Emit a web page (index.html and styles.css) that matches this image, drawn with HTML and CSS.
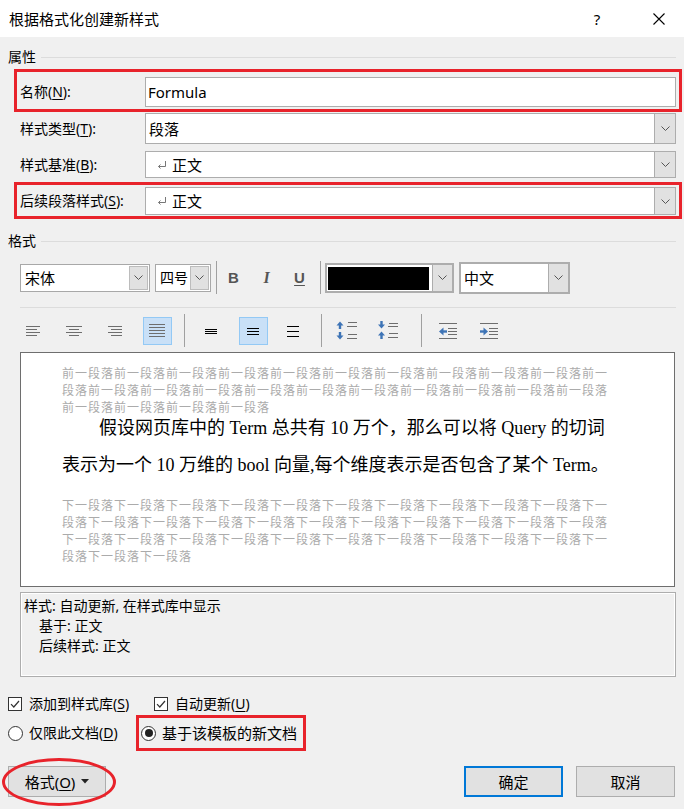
FILE: index.html
```html
<!DOCTYPE html>
<html lang="zh-CN">
<head>
<meta charset="utf-8">
<title>根据格式化创建新样式</title>
<link rel="stylesheet" href="styles.css">
</head>
<body>
<div class="titlebar">
  <span class="title">根据格式化创建新样式</span>
  <span class="help">?</span>
  <span class="close"><svg width="12" height="12" viewBox="0 0 12 12"><path d="M0.5 0.5L11.5 11.5M11.5 0.5L0.5 11.5" stroke="#000" stroke-width="1.1" fill="none"/></svg></span>
</div>

<div class="group-head"><span>属性</span><i class="rule"></i></div>

<div class="prop-row marked r1">
  <label>名称(<u>N</u>):</label>
  <div class="field h30"><span class="val latin">Formula</span></div>
</div>
<div class="prop-row r2">
  <label>样式类型(<u>T</u>):</label>
  <div class="field h31"><span class="val">段落</span><span class="dd"><svg width="9" height="5"><path d="M0.5 0.5L4.5 4.5L8.5 0.5" fill="none" stroke="#555"/></svg></span></div>
</div>
<div class="prop-row r3">
  <label>样式基准(<u>B</u>):</label>
  <div class="field h27"><span class="val ret"><svg class="retsym" width="10" height="8"><path d="M8.5 0V5.5H1.5M3.5 3.5L1.5 5.5L3.5 7.5" fill="none" stroke="#777"/></svg>正文</span><span class="dd"><svg width="9" height="5"><path d="M0.5 0.5L4.5 4.5L8.5 0.5" fill="none" stroke="#555"/></svg></span></div>
</div>
<div class="prop-row marked r4">
  <label>后续段落样式(<u>S</u>):</label>
  <div class="field h28"><span class="val ret"><svg class="retsym" width="10" height="8"><path d="M8.5 0V5.5H1.5M3.5 3.5L1.5 5.5L3.5 7.5" fill="none" stroke="#777"/></svg>正文</span><span class="dd"><svg width="9" height="5"><path d="M0.5 0.5L4.5 4.5L8.5 0.5" fill="none" stroke="#555"/></svg></span></div>
</div>

<div class="group-head g2"><span>格式</span><i class="rule"></i></div>

<div class="font-bar">
  <div class="select font"><span class="val">宋体</span><span class="dd inset"><svg width="9" height="5"><path d="M0.5 0.5L4.5 4.5L8.5 0.5" fill="none" stroke="#555"/></svg></span></div>
  <div class="select size"><span class="val">四号</span><span class="dd inset"><svg width="9" height="5"><path d="M0.5 0.5L4.5 4.5L8.5 0.5" fill="none" stroke="#555"/></svg></span></div>
  <i class="vsep s1"></i>
  <span class="fmt b">B</span>
  <span class="fmt i">I</span>
  <span class="fmt u">U</span>
  <i class="vsep s2"></i>
  <div class="select color"><span class="swatch"></span><span class="dd"><svg width="9" height="5"><path d="M0.5 0.5L4.5 4.5L8.5 0.5" fill="none" stroke="#555"/></svg></span></div>
  <div class="select lang"><span class="val">中文</span><span class="dd"><svg width="9" height="5"><path d="M0.5 0.5L4.5 4.5L8.5 0.5" fill="none" stroke="#555"/></svg></span></div>
</div>

<div class="hr"></div>

<div class="align-bar">
  <span class="tb m18"><svg width="27" height="26"><path d="M7 8.5h14M7 11.5h11M7 14.5h14M7 17.5h11" stroke="#6e6e6e"/></svg></span>
  <span class="tb m12"><svg width="27" height="26"><path d="M6 8.5h16M9 11.5h10M6 14.5h16M9 17.5h10" stroke="#6e6e6e"/></svg></span>
  <span class="tb m12"><svg width="27" height="26"><path d="M7 8.5h14M10 11.5h11M7 14.5h14M10 17.5h11" stroke="#6e6e6e"/></svg></span>
  <span class="tb on m14"><svg width="27" height="26"><path d="M5 6.5h16M5 9.5h16M5 12.5h16M5 15.5h16M5 18.5h16" stroke="#6e6e6e"/></svg></span>
  <i class="vsep tall m12"></i>
  <span class="tb m11"><svg width="27" height="26"><path d="M8 11.5h12M8 13.5h12M8 15.5h12" stroke="#000"/></svg></span>
  <span class="tb on m14"><svg width="27" height="26"><path d="M7 10.5h12M7 13.5h12M7 16.5h12" stroke="#000"/></svg></span>
  <span class="tb m10"><svg width="27" height="26"><path d="M8 8.5h12M8 13.5h12M8 18.5h12" stroke="#000"/></svg></span>
  <i class="vsep tall m14"></i>
  <span class="tb m10"><svg width="27" height="26"><path d="M3.5 7.5L7 3.5L10.5 7.5Z M3.5 17.5L7 21.5L10.5 17.5Z" fill="#3e74b6"/><path d="M7 6.5V11M7 14V18.5" stroke="#3e74b6" stroke-width="2.4"/><path d="M15 4.5h9M14 8.5h10M15 16.5h9M14 20.5h10" stroke="#6e6e6e"/></svg></span>
  <span class="tb m13"><svg width="27" height="26"><path d="M3 6.5L6.5 10.5L10 6.5Z M3 17.5L6.5 13.5L10 17.5Z" fill="#3e74b6"/><path d="M6.5 3V7.5M6.5 16.5V21" stroke="#3e74b6" stroke-width="2.4"/><path d="M14 5.5h9M13 8.5h10M14 15.5h9M13 19.5h10" stroke="#6e6e6e"/></svg></span>
  <i class="vsep tall m18"></i>
  <span class="tb m11"><svg width="27" height="26"><path d="M5 5.5h18M14 10.5h9M14 13.5h9M14 16.5h9M5 20.5h18" stroke="#6e6e6e"/><path d="M5 13.5L9.5 9.5V17.5Z" fill="#3e74b6"/><path d="M9 13.5H13" stroke="#3e74b6" stroke-width="2.4"/></svg></span>
  <span class="tb m12"><svg width="27" height="26"><path d="M5 5.5h18M14 10.5h9M14 13.5h9M14 16.5h9M5 20.5h18" stroke="#6e6e6e"/><path d="M13 13.5L8.5 9.5V17.5Z" fill="#3e74b6"/><path d="M5 13.5H9" stroke="#3e74b6" stroke-width="2.4"/></svg></span>
</div>

<div class="preview">
  <div class="ghost">
    <div>前一段落前一段落前一段落前一段落前一段落前一段落前一段落前一段落前一段落前一段落前一</div>
    <div>段落前一段落前一段落前一段落前一段落前一段落前一段落前一段落前一段落前一段落前一段落</div>
    <div>前一段落前一段落前一段落前一段落</div>
  </div>
  <div class="main">
    <div class="l1">假设网页库中的 Term 总共有 10 万个，那么可以将 Query 的切词</div>
    <div>表示为一个 10 万维的 bool 向量,每个维度表示是否包含了某个 Term。</div>
  </div>
  <div class="ghost after">
    <div>下一段落下一段落下一段落下一段落下一段落下一段落下一段落下一段落下一段落下一段落下一</div>
    <div>段落下一段落下一段落下一段落下一段落下一段落下一段落下一段落下一段落下一段落下一段落</div>
    <div>下一段落下一段落下一段落下一段落下一段落下一段落下一段落下一段落下一段落下一段落下一</div>
    <div>段落下一段落下一段落</div>
  </div>
</div>

<div class="desc">
  <div>样式: 自动更新, 在样式库中显示</div>
  <div class="ind">基于: 正文</div>
  <div class="ind">后续样式: 正文</div>
</div>

<div class="check-row">
  <span class="opt o1"><span class="cbox"><svg width="12" height="12"><path d="M2 6.2L4.8 9L10 3" fill="none" stroke="#333" stroke-width="1.2"/></svg></span><span class="lbl">添加到样式库(<u>S</u>)</span></span>
  <span class="opt"><span class="cbox"><svg width="12" height="12"><path d="M2 6.2L4.8 9L10 3" fill="none" stroke="#333" stroke-width="1.2"/></svg></span><span class="lbl">自动更新(<u>U</u>)</span></span>
</div>

<div class="radio-row">
  <span class="opt r-o1"><span class="radio"></span><span class="lbl r">仅限此文档(<u>D</u>)</span></span>
  <span class="opt marked-sm"><span class="radio on"></span><span class="lbl r">基于该模板的新文档</span></span>
</div>

<div class="btn-row">
  <span class="btn fmtbtn">格式(<u>O</u>)<svg class="caret" width="8" height="5"><path d="M0 0H8L4 4.5Z" fill="#222"/></svg></span>
  <span class="spacer"></span>
  <span class="btn primary">确定</span>
  <span class="btn cancel">取消</span>
</div>

<div class="ring"></div>
</body>
</html>
```
FILE: styles.css
```css
* { box-sizing: border-box; }
html, body { margin: 0; padding: 0; }
body {
  width: 684px;
  height: 809px;
  overflow: hidden;
  position: relative;
  background: #f0f0f0;
  color: #000;
  font-family: "Noto Sans", "Noto Sans CJK SC", sans-serif;
  font-size: 14px;
  white-space: nowrap;
}
u { text-decoration: underline; text-underline-offset: 2px; }

/* title bar */
.titlebar {
  height: 37px;
  background: #fff;
  display: flex;
  align-items: center;
  padding-left: 9px;
  padding-right: 6px;
}
.title { flex: 1; font-size: 15px; line-height: 20px; }
.help { width: 30px; text-align: center; font-size: 15px; line-height: 20px; margin-right: 28px; }
.close { width: 38px; display: flex; justify-content: center; }

/* group headers */
.group-head {
  display: flex;
  align-items: center;
  height: 18px;
  margin-top: 11px;
  padding: 0 8px;
  font-size: 14px;
  line-height: 18px;
}
.group-head.g2 { margin-top: 13px; }
.group-head .rule { flex: 1; height: 1px; background: #dcdcdc; margin-left: 5px; }

/* property rows */
.prop-row {
  display: flex;
  align-items: center;
  margin: 0 8px 0 20px;
}
.prop-row label { width: 125px; font-size: 14px; line-height: 20px; }
.marked {
  border: 3px solid #e8232b;
  margin: 0 2px 0 14px;
  padding-left: 3px;
  padding-right: 3px;
}
.r1 { margin-top: 3px; padding-top: 5px; padding-bottom: 2px; }
.r2 { margin-top: 1px; }
.r3 { margin-top: 7px; }
.r4 { margin-top: 4px; padding-top: 2px; padding-bottom: 1px; }

.field {
  flex: 1;
  display: flex;
  align-items: center;
  background: #fff;
  border: 1px solid #adadad;
}
.h30 { height: 30px; }
.h31 { height: 31px; }
.h27 { height: 27px; }
.h28 { height: 28px; }
.field .val { flex: 1; padding-left: 3px; font-size: 15px; line-height: 20px; }
.field .val.latin { padding-left: 2px; }
.val.ret { display: flex; align-items: center; padding-left: 11px; }
.retsym { margin-right: 5px; }
.dd {
  width: 21px;
  flex: none;
  align-self: stretch;
  background: #e1e1e1;
  border-left: 1px solid #adadad;
  display: flex;
  align-items: center;
  justify-content: center;
}

/* font bar */
.font-bar {
  display: flex;
  align-items: center;
  height: 33px;
  margin: 11px 0 0 20px;
}
.select {
  display: flex;
  align-items: stretch;
  background: #fff;
  border: 1px solid #a8a8a8;
  font-size: 15px;
}
.select .val { flex: 1; padding-left: 4px; line-height: 26px; overflow: hidden; }
.select.font { width: 130px; height: 28px; }
.select.size { width: 56px; height: 28px; margin-left: 5px; font-size: 14px; }
.select.size .val { padding-left: 4px; }
.dd.inset { width: 19px; margin: 1px; border: 1px solid #bcbcbc; }
.select.color { width: 129px; height: 30px; margin-left: 4px; border: 2px solid #adadad; }
.swatch { width: 102px; margin: 2px 3px 1px 1px; background: #000; }
.select.color .dd { width: 20px; }
.select.lang { width: 111px; height: 32px; margin-left: 5px; border: 2px solid #adadad; }
.select.lang .val { line-height: 28px; padding-left: 3px; }
.select.lang .dd { width: 20px; }

.vsep { display: block; width: 1px; height: 33px; background: #a0a0a0; }
.vsep.s1 { margin-left: 5px; }
.vsep.s2 { margin-left: 4px; }
.fmt {
  width: 33px;
  text-align: center;
  font-family: "Liberation Sans", sans-serif;
  font-size: 15px;
  line-height: 20px;
  font-weight: bold;
  color: #555;
}
.fmt.i { font-family: "Liberation Serif", serif; font-style: italic; font-size: 16px; }
.fmt.u { text-decoration: underline; text-underline-offset: 2px; }

.hr { height: 1px; background: #dcdcdc; margin: 13px 8px 0 20px; }

/* alignment bar */
.align-bar {
  display: flex;
  align-items: center;
  height: 33px;
  margin-top: 6px;
}
.tb {
  width: 29px;
  height: 28px;
  border: 1px solid transparent;
  display: flex;
  align-items: center;
  justify-content: center;
}
.tb.on { background: #c9e0f7; border-color: #93c9f5; }
.m10 { margin-left: 10px; }
.m11 { margin-left: 11px; }
.m12 { margin-left: 12px; }
.m13 { margin-left: 13px; }
.m14 { margin-left: 14px; }
.m18 { margin-left: 18px; }

/* preview */
.preview {
  margin: 5px 9px 0 20px;
  height: 235px;
  background: #fff;
  border: 1px solid #6e6e6e;
  padding: 11px 0 0 41px;
}
.ghost {
  font-family: "Noto Sans CJK SC", sans-serif;
  font-size: 12px;
  letter-spacing: 1px;
  line-height: 17px;
  color: #ababab;
}
.ghost.after { margin-top: 12px; }
.main {
  margin-top: -5px;
  font-family: "Liberation Serif", "Noto Sans CJK SC", serif;
  font-size: 18px;
  line-height: 37px;
}
.main .l1 { padding-left: 37px; }

/* description */
.desc {
  margin: 5px 8px 0 20px;
  height: 85px;
  border: 1px solid #adadad;
  box-shadow: inset 0 0 0 1px #fff;
  padding: 3px 0 0 3px;
  font-size: 14px;
  line-height: 20px;
}
.desc .ind { padding-left: 15px; }

/* options */
.check-row, .radio-row {
  display: flex;
  align-items: center;
  padding-left: 8px;
  font-size: 14px;
  line-height: 20px;
}
.check-row { height: 20px; margin-top: 17px; }
.radio-row { height: 36px; margin-top: 1px; }
.opt { display: flex; align-items: center; }
.opt.o1 { width: 146px; }
.opt.r-o1 { width: 128px; }
.cbox {
  width: 14px;
  height: 14px;
  border: 1px solid #333;
  background: #fff;
  display: flex;
  align-items: center;
  justify-content: center;
}
.lbl { margin-left: 7px; }
.lbl.r { margin-left: 6px; }
.radio {
  width: 15px;
  height: 15px;
  border-radius: 50%;
  border: 1px solid #333;
  background: #fff;
  display: flex;
  align-items: center;
  justify-content: center;
}
.radio.on::after {
  content: "";
  width: 8px;
  height: 8px;
  border-radius: 50%;
  background: #222;
}
.marked-sm {
  height: 36px;
  width: 170px;
  border: 3px solid #e8232b;
  padding-left: 2px;
}
.marked-sm .lbl { font-size: 15px; }

/* buttons */
.btn-row {
  display: flex;
  height: 31px;
  margin-top: 15px;
  padding: 0 9px 0 8px;
}
.spacer { flex: 1; }
.btn {
  height: 31px;
  width: 99px;
  background: #e1e1e1;
  border: 1px solid #adadad;
  display: flex;
  align-items: center;
  justify-content: center;
  font-size: 15px;
  line-height: 20px;
}
.btn.fmtbtn { width: 98px; }
.caret { margin-left: 6px; }
.btn.primary { border: 2px solid #0078d7; }
.btn.cancel { margin-left: 13px; }

/* hand-drawn annotation over the format button */
.ring {
  position: absolute;
  left: 2px;
  top: 758px;
  width: 114px;
  height: 48px;
  border: 3px solid #e8232b;
  border-radius: 50%;
  pointer-events: none;
}
```
